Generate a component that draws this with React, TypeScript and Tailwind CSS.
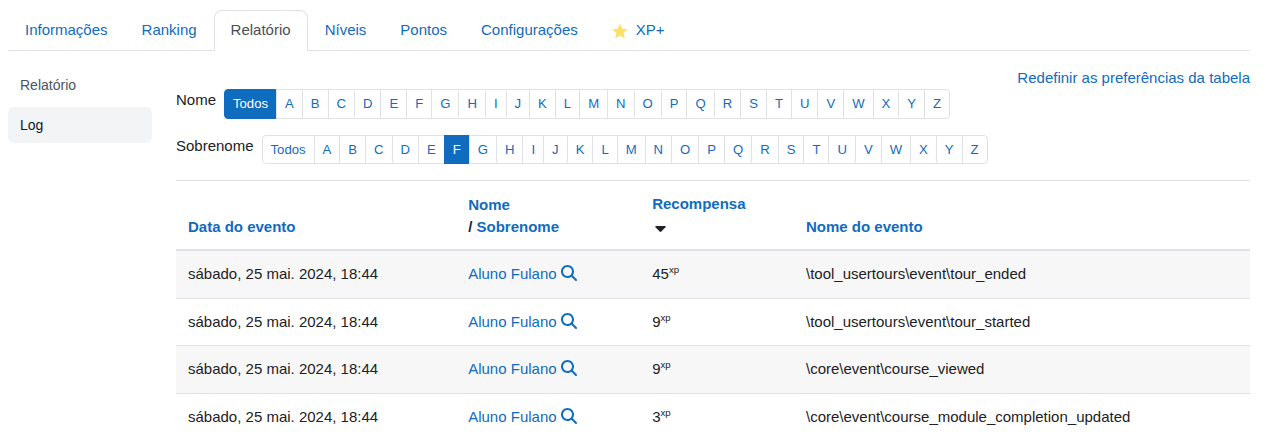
import { FaMagnifyingGlass } from "react-icons/fa6";

const letters = "ABCDEFGHIJKLMNOPQRSTUVWXYZ".split("");
const tabs = ["Informações", "Ranking", "Relatório", "Níveis", "Pontos", "Configurações"];

const rows = [
  { points: 45, event: "\\tool_usertours\\event\\tour_ended" },
  { points: 9, event: "\\tool_usertours\\event\\tour_started" },
  { points: 9, event: "\\core\\event\\course_viewed" },
  { points: 3, event: "\\core\\event\\course_module_completion_updated" },
];

function StarIcon() {
  return (
    <svg viewBox="0 0 16 16" className="mt-px mr-2 size-4 fill-[#ffe066]" aria-hidden="true">
      <path d="M8 .4l2.25 5.25 5.65.5-4.3 3.75 1.3 5.55L8 12.5l-4.9 2.95 1.3-5.55L.1 6.15l5.65-.5z" />
    </svg>
  );
}

function CaretIcon() {
  return (
    <svg viewBox="0 0 11 6" className="h-[6px] w-[11px] fill-current" aria-hidden="true">
      <path d="M1 0h9c.8 0 1 .7.5 1.2L6.3 5.6c-.5.5-1.1.5-1.6 0L.5 1.2C0 .7.2 0 1 0z" />
    </svg>
  );
}

function Tabs() {
  return (
    <nav className="flex border-b border-[#dee2e6] text-[#0f6cbf]">
      {tabs.map((tab) => (
        <a
          key={tab}
          className={
            tab === "Relatório"
              ? "-mb-px rounded-t-lg border border-[#dee2e6] border-b-white bg-white px-4 py-2 text-[#495057]"
              : "-mb-px border border-transparent px-4 py-2"
          }
        >
          {tab}
        </a>
      ))}
      <a className="-mb-px flex items-center border border-transparent px-4 py-2">
        <StarIcon />
        XP+
      </a>
    </nav>
  );
}

function InitialBar({ label, active }: { label: string; active: string }) {
  return (
    <div className="mb-4 flex items-start">
      <span className="mr-2">{label}</span>
      <div className="flex text-[13.125px] text-[#0f6cbf]">
        {["Todos", ...letters].map((item) => (
          <a
            key={item}
            className={
              item === active
                ? "-ml-px border border-[#0f6cbf] bg-[#0f6cbf] px-2 py-1 leading-[19.69px] text-white first:ml-0 first:rounded-l"
                : "-ml-px border border-[#dee2e6] bg-white px-2 py-1 leading-[19.69px] first:ml-0 first:rounded-l last:rounded-r"
            }
          >
            {item}
          </a>
        ))}
      </div>
    </div>
  );
}

function LogTable() {
  return (
    <table className="w-full table-fixed border-collapse text-left">
      <colgroup>
        <col className="w-[280.2px]" />
        <col className="w-[184px]" />
        <col className="w-[153.8px]" />
        <col />
      </colgroup>
      <thead>
        <tr className="border-t border-b-2 border-[#dee2e6] align-bottom text-[#0f6cbf]">
          <th className="px-3 pt-3 pb-[10.5px]">Data do evento</th>
          <th className="px-3 pt-3 pb-[10.5px]">
            Nome
            <br />
            <span className="text-[#1d2125]">/</span> Sobrenome
          </th>
          <th className="px-3 pt-3 pb-[10.5px]">
            Recompensa
            <span className="flex h-[23px] w-4 items-center justify-center pt-1 text-[#1d2125]">
              <CaretIcon />
            </span>
          </th>
          <th className="px-3 pt-3 pb-[10.5px]">Nome do evento</th>
        </tr>
      </thead>
      <tbody>
        {rows.map((row) => (
          <tr key={row.event} className="border-t border-[#dee2e6] align-top odd:bg-[#f7f7f7]">
            <td className="p-3">sábado, 25 mai. 2024, 18:44</td>
            <td className="p-3 text-[#0f6cbf]">
              <span className="flex">
                Aluno Fulano
                <FaMagnifyingGlass className="mt-[2px] ml-[4.4px] size-4 [stroke-width:0]" />
              </span>
            </td>
            <td className="p-3">
              <span className="flex">
                {row.points}
                <span className="text-[9.6px] leading-[14px]">xp</span>
              </span>
            </td>
            <td className="p-3">{row.event}</td>
          </tr>
        ))}
      </tbody>
    </table>
  );
}

export default function App() {
  return (
    <div className="h-[447px] overflow-hidden bg-white pt-[10px] pr-[22px] pl-2 font-['Liberation_Sans',Arial,sans-serif] text-[15px] leading-[22.5px] text-[#1d2125]">
      <Tabs />
      <div className="flex gap-6 pt-4">
        <aside className="flex w-36 shrink-0 flex-col gap-1 text-sm">
          <a className="rounded-md px-3 py-2 text-[#4b5563]">Relatório</a>
          <a className="rounded-md bg-[#f3f4f6] px-3 py-2 text-[#111827]">Log</a>
        </aside>
        <main className="min-w-0 flex-1">
          <div className="text-right text-[#0f6cbf]">Redefinir as preferências da tabela</div>
          <InitialBar label="Nome" active="Todos" />
          <InitialBar label="Sobrenome" active="F" />
          <LogTable />
        </main>
      </div>
    </div>
  );
}
